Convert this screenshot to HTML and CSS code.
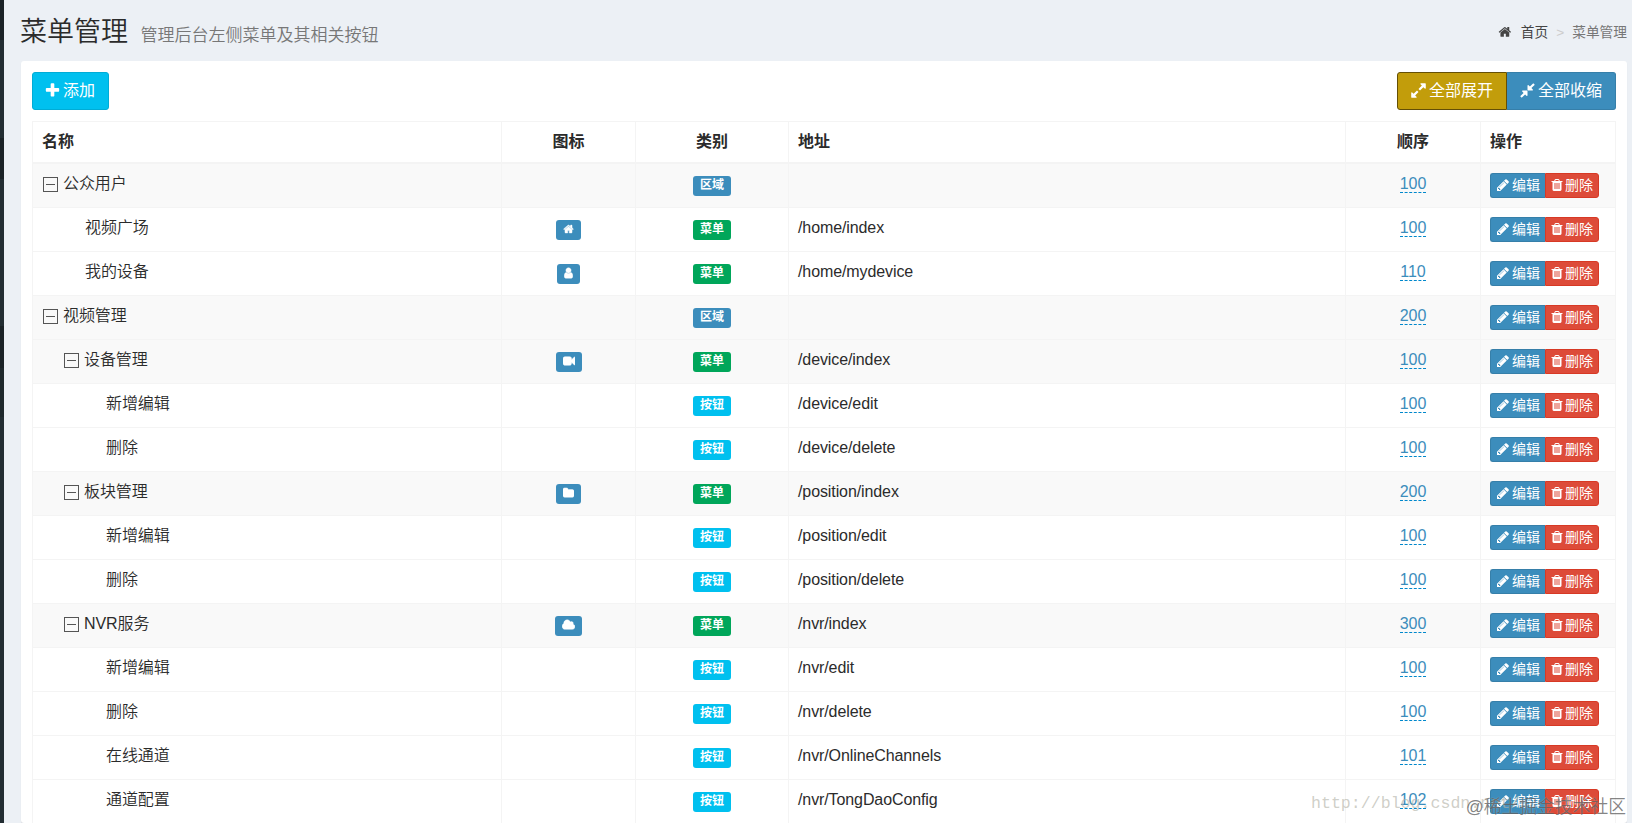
FILE: index.html
```
<!DOCTYPE html>
<html lang="zh-CN">
<head>
  <meta charset="UTF-8" />
  <meta name="viewport" content="width=device-width, initial-scale=1.0" />
  <title>菜单管理</title>
  <link rel="stylesheet" href="styles.css">
</head>
<body>
  <svg class="sprite" xmlns="http://www.w3.org/2000/svg">
    <symbol id="i-home" viewBox="0 0 1792 1792"><path d="M1472 992v480q0 26-19 45t-45 19h-384v-384h-256v384h-384q-26 0-45-19t-19-45v-480q0-1 .5-3t.5-3l575-474 575 474q1 2 1 6zm223-69l-62 74q-8 9-21 11h-3q-13 0-21-7l-692-577-692 577q-12 8-24 7-13-2-21-11l-62-74q-8-10-7-23.5t11-21.5l719-599q32-26 76-26t76 26l244 204v-195q0-14 9-23t23-9h192q14 0 23 9t9 23v408l219 182q10 8 11 21.5t-7 23.5z"/></symbol>
    <symbol id="i-plus" viewBox="0 0 1792 1792"><path d="M1600 736v192q0 40-28 68t-68 28h-416v416q0 40-28 68t-68 28h-192q-40 0-68-28t-28-68v-416h-416q-40 0-68-28t-28-68v-192q0-40 28-68t68-28h416v-416q0-40 28-68t68-28h192q40 0 68 28t28 68v416h416q40 0 68 28t28 68z"/></symbol>
    <symbol id="i-pencil" viewBox="0 0 1792 1792"><path d="M491 1536l91-91-235-235-91 91v107h128v128h107zm523-928q0-22-22-22-10 0-17 7l-542 542q-7 7-7 17 0 22 22 22 10 0 17-7l542-542q7-7 7-17zm-54-192l416 416-832 832h-416v-416zm683 96q0 53-37 90l-166 166-416-416 166-165q36-38 90-38 53 0 91 38l235 234q37 39 37 91z"/></symbol>
    <symbol id="i-trash" viewBox="0 0 1792 1792"><path d="M704 1376v-704q0-14-9-23t-23-9h-64q-14 0-23 9t-9 23v704q0 14 9 23t23 9h64q14 0 23-9t9-23zm256 0v-704q0-14-9-23t-23-9h-64q-14 0-23 9t-9 23v704q0 14 9 23t23 9h64q14 0 23-9t9-23zm256 0v-704q0-14-9-23t-23-9h-64q-14 0-23 9t-9 23v704q0 14 9 23t23 9h64q14 0 23-9t9-23zm-544-992h448l-48-117q-7-9-17-11h-317q-10 2-17 11zm928 32v64q0 14-9 23t-23 9h-96v948q0 83-47 143.5t-113 60.5h-832q-66 0-113-58.5t-47-141.5v-952h-96q-14 0-23-9t-9-23v-64q0-14 9-23t23-9h309l70-167q15-37 54-63t79-26h320q40 0 79 26t54 63l70 167h309q14 0 23 9t9 23z"/></symbol>
    <symbol id="i-expand" viewBox="0 0 1792 1792"><path d="M883 1056q0 13-10 23l-332 332 144 144q19 19 19 45t-19 45-45 19h-448q-26 0-45-19t-19-45v-448q0-26 19-45t45-19 45 19l144 144 332-332q10-10 23-10t23 10l114 114q10 10 10 23zm781-864v448q0 26-19 45t-45 19-45-19l-144-144-332 332q-10 10-23 10t-23-10l-114-114q-10-10-10-23t10-23l332-332-144-144q-19-19-19-45t19-45 45-19h448q26 0 45 19t19 45z"/></symbol>
    <symbol id="i-compress" viewBox="0 0 1792 1792"><path d="M896 960v448q0 26-19 45t-45 19-45-19l-144-144-332 332q-10 10-23 10t-23-10l-114-114q-10-10-10-23t10-23l332-332-144-144q-19-19-19-45t19-45 45-19h448q26 0 45 19t19 45zm755-672q0 13-10 23l-332 332 144 144q19 19 19 45t-19 45-45 19h-448q-26 0-45-19t-19-45v-448q0-26 19-45t45-19 45 19l144 144 332-332q10-10 23-10t23 10l114 114q10 10 10 23z"/></symbol>
    <symbol id="i-user" viewBox="256 0 1280 1792"><path d="M1536 1399q0 109-62.5 187t-150.5 78h-854q-88 0-150.5-78t-62.5-187q0-85 8.5-160.5t31.5-152 58.5-131 94-89 134.5-34.5q131 128 313 128t313-128q76 0 134.5 34.5t94 89 58.5 131 31.5 152 8.5 160.5zm-256-887q0 159-112.5 271.5t-271.5 112.5-271.5-112.5-112.5-271.5 112.5-271.5 271.5-112.5 271.5 112.5 112.5 271.5z"/></symbol>
    <symbol id="i-video" viewBox="0 0 1792 1792"><path d="M1792 352v1088q0 42-39 59-13 5-25 5-27 0-45-19l-403-403v166q0 119-84.5 203.5t-203.5 84.5h-704q-119 0-203.5-84.5t-84.5-203.5v-704q0-119 84.5-203.5t203.5-84.5h704q119 0 203.5 84.5t84.5 203.5v165l403-402q18-19 45-19 12 0 25 5 39 17 39 59z"/></symbol>
    <symbol id="i-folder" viewBox="64 0 1664 1792"><path d="M1728 608v704q0 92-66 158t-158 66h-1216q-92 0-158-66t-66-158v-960q0-92 66-158t158-66h320q92 0 158 66t66 158v32h672q92 0 158 66t66 158z"/></symbol>
    <symbol id="i-cloud" viewBox="64 0 1920 1792"><path d="M1984 1152q0 159-112.5 271.5t-271.5 112.5h-1088q-185 0-316.5-131.5t-131.5-316.5q0-132 71-241.5t187-163.5q-2-28-2-43 0-212 150-362t362-150q158 0 286.5 88t187.5 230q70-62 166-62 106 0 181 75t75 181q0 75-41 138 129 30 213 134.5t84 239.5z"/></symbol>
  </svg>

  <div class="wrapper">
    <aside class="sidebar">
      <div class="side-item dark first"></div>
      <div class="side-item mid"></div>
      <div class="side-item dark active"></div>
      <div class="side-item mid second"></div>
      <div class="side-item dark third"></div>
      <div class="side-item sub"></div>
    </aside>

    <main class="content">
      <header class="content-header">
        <h1>菜单管理 <small>管理后台左侧菜单及其相关按钮</small></h1>
        <nav class="breadcrumb">
          <svg><use href="#i-home"/></svg>
          <a>首页</a>
          <span class="sep">&gt;</span>
          <span>菜单管理</span>
        </nav>
      </header>

      <section class="box">
        <div class="toolbar">
          <button class="btn btn-info"><svg><use href="#i-plus"/></svg>添加</button>
          <div class="btn-group">
            <button class="btn btn-warning"><svg><use href="#i-expand"/></svg>全部展开</button><button class="btn btn-primary"><svg><use href="#i-compress"/></svg>全部收缩</button>
          </div>
        </div>

        <table class="tree">
          <colgroup>
            <col class="c-name"><col class="c-icon"><col class="c-type"><col class="c-url"><col class="c-sort"><col class="c-op">
          </colgroup>
          <thead>
            <tr><th>名称</th><th class="center">图标</th><th class="center">类别</th><th>地址</th><th class="center">顺序</th><th>操作</th></tr>
          </thead>
          <tbody id="menu-rows"></tbody>
        </table>
      </section>
    </main>
  </div>

  <div class="mark mark-blog">http://blog.csdn.net/</div>
  <div class="mark mark-site">@稀土掘金技术社区</div>

  <script>
    // name, level, has children, icon, type, url, order
    const menus = [
      ["公众用户", 0, true, "", "区域", "", 100],
      ["视频广场", 2, false, "home", "菜单", "/home/index", 100],
      ["我的设备", 2, false, "user", "菜单", "/home/mydevice", 110],
      ["视频管理", 0, true, "", "区域", "", 200],
      ["设备管理", 1, true, "video", "菜单", "/device/index", 100],
      ["新增编辑", 3, false, "", "按钮", "/device/edit", 100],
      ["删除", 3, false, "", "按钮", "/device/delete", 100],
      ["板块管理", 1, true, "folder", "菜单", "/position/index", 200],
      ["新增编辑", 3, false, "", "按钮", "/position/edit", 100],
      ["删除", 3, false, "", "按钮", "/position/delete", 100],
      ["NVR服务", 1, true, "cloud", "菜单", "/nvr/index", 300],
      ["新增编辑", 3, false, "", "按钮", "/nvr/edit", 100],
      ["删除", 3, false, "", "按钮", "/nvr/delete", 100],
      ["在线通道", 3, false, "", "按钮", "/nvr/OnlineChannels", 101],
      ["通道配置", 3, false, "", "按钮", "/nvr/TongDaoConfig", 102]
    ];
    const colors = { "区域": "blue", "菜单": "green", "按钮": "aqua" };

    document.getElementById("menu-rows").innerHTML = menus.map(([name, level, parent, icon, type, url, order]) => `
      <tr class="${parent ? "parent" : ""}">
        <td class="lv${level}">${parent ? '<i class="toggle"></i>' : ""}${name}</td>
        <td class="center">${icon ? `<span class="label blue"><svg class="w-${icon}"><use href="#i-${icon}"/></svg></span>` : ""}</td>
        <td class="center"><span class="label ${colors[type]}">${type}</span></td>
        <td>${url}</td>
        <td class="center"><a class="editable">${order}</a></td>
        <td><div class="ops"><a class="xs edit"><svg><use href="#i-pencil"/></svg>编辑</a><a class="xs del"><svg><use href="#i-trash"/></svg>删除</a></div></td>
      </tr>`).join("");
  </script>
</body>
</html>
```
FILE: styles.css
```
* {
  box-sizing: border-box;
}

html, body {
  margin: 0;
  height: 823px;
  overflow: hidden;
}

body {
  font-family: "Liberation Sans", "Noto Sans CJK SC", sans-serif;
  font-size: 16px;
  font-weight: 350;
  line-height: 23px;
  color: #2b2b2b;
  background: #ecf0f5;
}

svg {
  width: 1em;
  height: 1em;
  fill: currentColor;
  flex: none;
}

.sprite {
  display: none;
}

.wrapper {
  display: flex;
  height: 823px;
}

/* sidebar */
.sidebar {
  width: 4px;
  background: #222d32;
  flex: none;
}

.side-item { height: 98px; }
.side-item.dark { background: #1a2226; }
.side-item.mid { background: #222d32; }
.side-item.first { height: 40px; }
.side-item.active { height: 41px; }
.side-item.second { height: 147px; }
.side-item.third { height: 42px; }
.side-item.sub { height: 49px; background: #1e282c; }

/* header */
.content {
  flex: 1;
  min-width: 0;
  padding: 0 5px 0 17px;
}

.content-header {
  display: flex;
  justify-content: space-between;
  height: 61px;
}

h1 {
  margin: 13px 0 0 -1px;
  font-size: 27px;
  font-weight: 350;
  line-height: 38px;
}

h1 small {
  margin-left: 5px;
  font-size: 17px;
  color: #777;
}

.breadcrumb {
  display: flex;
  align-items: center;
  height: 24px;
  margin-top: 20px;
  font-size: 13.7px;
  font-weight: 400;
  color: #777;
}

.breadcrumb svg {
  color: #444;
  margin-right: 9px;
}

.breadcrumb a { color: #444; }

.breadcrumb .sep {
  margin: 0 8px;
  color: #ccc;
}

/* box */
.box {
  height: 762px;
  overflow: hidden;
  padding: 11px;
  background: #fff;
  border-radius: 3px;
  box-shadow: 0 1px 1px rgba(0, 0, 0, 0.1);
}

.toolbar {
  display: flex;
  justify-content: space-between;
  margin-bottom: 11px;
}

.btn-group { display: flex; }

.btn {
  display: flex;
  align-items: center;
  height: 38px;
  padding: 0 12px 1px;
  border: 1px solid;
  border-radius: 3px;
  font: inherit;
  font-weight: 400;
  color: #fff;
}

.btn svg {
  width: 17px;
  height: 17px;
  margin-right: 2px;
}

.btn-info {
  width: 77px;
  padding: 0 11px 1px;
  background: #00c0ef;
  border-color: #00acd6;
}

.btn-warning {
  width: 110px;
  background: #c29d0b;
  border-color: #644f05;
  border-radius: 3px 0 0 3px;
}

.btn-primary {
  width: 109px;
  background: #3c8dbc;
  border-color: #367fa9;
  border-left: 0;
  border-radius: 0 3px 3px 0;
}

/* table */
.tree {
  width: 1584px;
  table-layout: fixed;
  border-collapse: separate;
  border-spacing: 0;
  border-top: 1px solid #f4f4f4;
  border-left: 1px solid #f4f4f4;
}

.c-name { width: 469px; }
.c-icon { width: 134px; }
.c-type { width: 153px; }
.c-url { width: 557px; }
.c-sort { width: 135px; }
.c-op { width: 135px; }

th, td {
  padding: 0 9px;
  text-align: left;
  border-right: 1px solid #f4f4f4;
  border-bottom: 1px solid #f4f4f4;
}

th {
  height: 42px;
  padding-bottom: 2px;
  border-bottom-width: 2px;
}

td {
  height: 44px;
  padding-bottom: 5px;
  letter-spacing: -0.1px;
}

.center { text-align: center; }
.parent td { background: #f9f9f9; }

.lv1 { padding-left: 30px; }
.lv2 { padding-left: 52px; }
.lv3 { padding-left: 73px; }

.toggle {
  display: inline-block;
  position: relative;
  width: 15px;
  height: 15px;
  margin: 0 5px 0 1px;
  border: 1px solid #555;
  vertical-align: -3px;
}

.toggle::after {
  content: "";
  position: absolute;
  left: 2px;
  right: 2px;
  top: 6px;
  height: 1px;
  background: #555;
}

.label {
  display: inline-block;
  height: 20px;
  padding: 0 7px;
  border-radius: 3px;
  font-size: 12px;
  font-weight: 700;
  line-height: 18px;
  letter-spacing: 0;
  color: #fff;
  vertical-align: middle;
  position: relative;
  top: 2px;
}

.label svg {
  width: 11px;
  height: 12px;
  vertical-align: -2px;
  stroke: currentColor;
  stroke-width: 70;
}

.label .w-user { width: 9px; }
.label .w-video { width: 12px; }
.label .w-cloud { width: 13px; }

.blue { background: #3c8dbc; }
.green { background: #00a65a; }
.aqua { background: #00c0ef; }

.editable {
  display: inline-block;
  height: 20px;
  line-height: 22px;
  letter-spacing: 0;
  color: #3c8dbc;
  border-bottom: 1px dashed #08c;
}

.ops {
  display: flex;
  position: relative;
  top: 2px;
}

.xs {
  display: flex;
  align-items: center;
  height: 25px;
  padding: 0 5px;
  border: 1px solid;
  font-size: 14px;
  font-weight: 400;
  letter-spacing: 0;
  white-space: nowrap;
  color: #fff;
}

.xs svg { margin-right: 2px; }

.edit {
  width: 55px;
  background: #3c8dbc;
  border-color: #367fa9;
  border-right: 0;
  border-radius: 3px 0 0 3px;
}

.del {
  width: 54px;
  padding: 0 4px;
  background: #dd4b39;
  border-color: #d73925;
  border-radius: 0 3px 3px 0;
}

.del svg { margin-right: 1px; }

/* watermarks */
.mark {
  position: absolute;
  white-space: nowrap;
  pointer-events: none;
}

.mark-blog {
  left: 1311px;
  top: 792px;
  font: 16.6px/24px "Liberation Mono", monospace;
  color: rgba(180, 180, 170, 0.65);
}

.mark-site {
  right: 6px;
  top: 795px;
  font-size: 17.8px;
  line-height: 24px;
  color: rgba(60, 60, 60, 0.65);
  text-shadow: 0 0 1px rgba(255, 255, 255, 0.5);
}
```
